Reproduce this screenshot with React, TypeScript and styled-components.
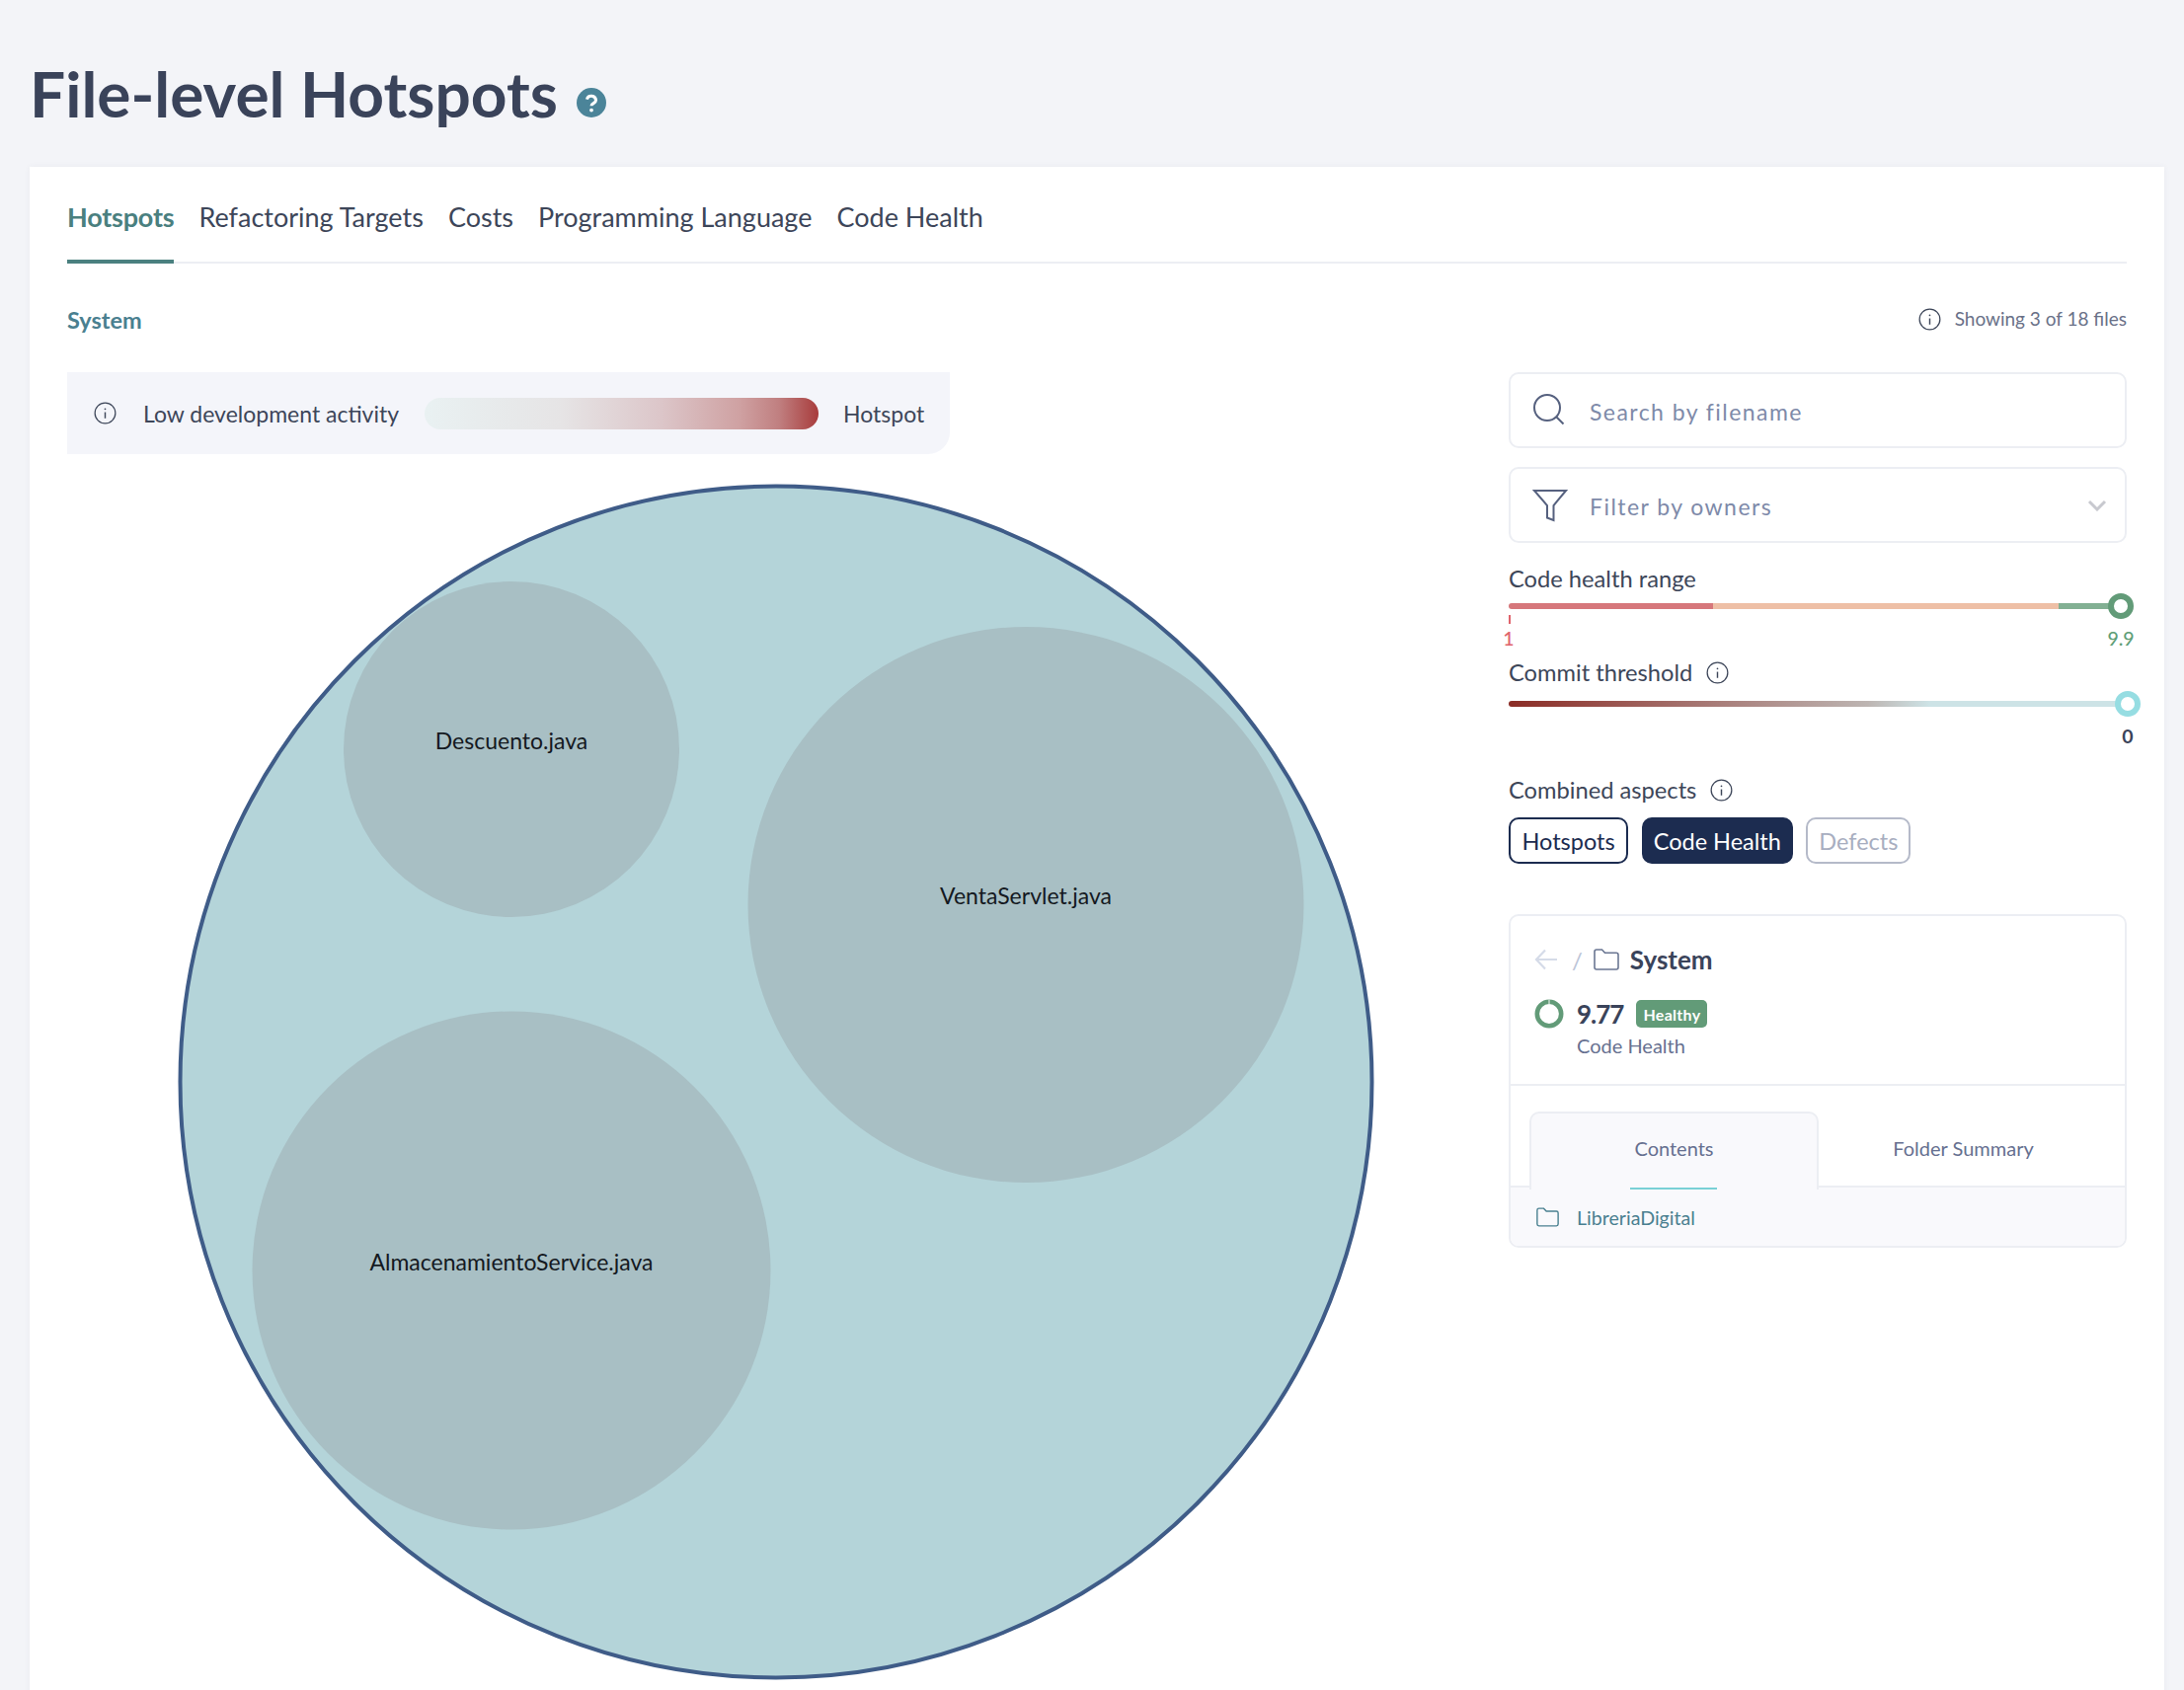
import React from "react";
import styled, { createGlobalStyle } from "styled-components";

const FONT = `"Lato", "Noto Sans", sans-serif`;

const Global = createGlobalStyle`
  html, body { margin: 0; padding: 0; background: #f3f4f8; }
  * { box-sizing: border-box; }
  body { font-family: ${FONT}; color: #3d4659; }
`;

const Page = styled.div`
  height: 1712px;
  overflow: hidden;
  padding: 0 20px 0 30px;
  background: #f3f4f8;
`;
const TitleRow = styled.header`
  height: 169px;
  display: flex;
  align-items: center;
  gap: 19px;
  padding-top: 21px;
`;
const Title = styled.h1`
  margin: 0;
  font-size: 64px;
  line-height: 70px;
  font-weight: 700;
  color: #3a435a;
`;
const Card = styled.main`
  background: #fff;
  padding: 0 38px;
  height: 1600px;
  box-shadow: 0 0 6px rgba(60, 70, 100, 0.06);
`;
const Tabs = styled.nav`
  height: 98px;
  display: flex;
  gap: 25px;
  border-bottom: 2px solid #eceef3;
`;
const Tab = styled.div<{ $active?: boolean }>`
  height: 98px;
  padding-top: 34px;
  font-size: 27px;
  line-height: 34px;
  font-weight: ${(p) => (p.$active ? 700 : 400)};
  letter-spacing: ${(p) => (p.$active ? "-0.2px" : "0")};
  color: ${(p) => (p.$active ? "#4a807f" : "#3d4659")};
  border-bottom: 4px solid ${(p) => (p.$active ? "#4a807f" : "transparent")};
`;
const SystemRow = styled.div`
  height: 110px;
  padding-top: 43px;
  display: flex;
  justify-content: space-between;
  align-items: flex-start;
`;
const SystemName = styled.div`
  font-size: 23.5px;
  line-height: 28px;
  font-weight: 700;
  color: #4a8090;
`;
const Showing = styled.div`
  display: flex;
  align-items: center;
  gap: 14px;
  margin-top: -1px;
  font-size: 19px;
  line-height: 28px;
  color: #6a7188;
`;
const Columns = styled.div`
  display: grid;
  grid-template-columns: 1fr 626px;
`;
const LeftCol = styled.section`
  min-width: 0;
`;
const Legend = styled.div`
  width: 894px;
  height: 83px;
  background: #f4f5fa;
  border-bottom-right-radius: 22px;
  display: flex;
  align-items: center;
  padding-left: 27px;
  font-size: 23px;
  color: #3d4659;
`;
const LegendStart = styled.span`
  margin-left: 27px;
  width: 270px;
`;
const LegendBar = styled.div`
  width: 399px;
  height: 32px;
  border-radius: 16px;
  margin-left: 15px;
  margin-right: 25px;
  background: linear-gradient(90deg, #e9f1f2 0%, #e6e4e5 35%, #dcc6c9 60%, #cfa1a2 80%, #c07f80 90%, #a83c3c 100%);
`;
const Chart = styled.svg`
  display: block;
  margin-top: 27px;
  width: 1340px;
  height: 1240px;
  overflow: visible;
`;
const ChartLabel = styled.text`
  font-family: ${FONT};
  font-size: 23px;
  fill: #14191f;
  text-anchor: middle;
`;
const RightCol = styled.aside`
  display: flex;
  flex-direction: column;
`;
const Field = styled.div`
  height: 77px;
  border: 2px solid #eceef3;
  border-radius: 10px;
  display: flex;
  align-items: center;
  padding-left: 22px;
  margin-bottom: 19px;
  font-size: 23px;
  letter-spacing: 1.45px;
  color: #7e8aa9;
`;
const FieldText = styled.span`
  margin-left: 22px;
  flex: 1;
  padding-top: 2px;
`;
const Chevron = styled.svg`
  margin-right: 18px;
`;
const Label = styled.div<{ $top: number }>`
  display: flex;
  align-items: center;
  gap: 14px;
  font-size: 23.7px;
  line-height: 30px;
  color: #3d4659;
  margin-top: ${(p) => p.$top}px;
`;
const SliderTrack = styled.div<{ $width: number; $top: number }>`
  position: relative;
  width: ${(p) => p.$width}px;
  height: 26px;
  margin-top: ${(p) => p.$top}px;
  display: flex;
  align-items: center;
`;
const Segment = styled.div<{ $grow: number; $color: string }>`
  flex: ${(p) => p.$grow} 0 0;
  height: 6px;
  background: ${(p) => p.$color};
  &:first-child { border-radius: 3px 0 0 3px; }
`;
const GradientBar = styled.div`
  width: 100%;
  height: 6px;
  border-radius: 3px;
  background: linear-gradient(90deg, #8b2c25 0%, #a57470 30%, #bdb5b2 58%, #cde3e6 68%, #cde3e6 100%);
`;
const Thumb = styled.div<{ $color: string }>`
  position: absolute;
  right: -13px;
  top: 0;
  width: 26px;
  height: 26px;
  border-radius: 50%;
  background: #fff;
  border: 6px solid ${(p) => p.$color};
`;
const Tick = styled.div`
  position: absolute;
  left: 0;
  top: 22px;
  width: 2px;
  height: 9px;
  background: #e0636c;
`;
const ValueRow = styled.div<{ $width: number; $top: number }>`
  width: ${(p) => p.$width}px;
  margin-top: ${(p) => p.$top}px;
  height: 24px;
  display: flex;
  justify-content: space-between;
  font-size: 19.5px;
  line-height: 24px;
`;
const Value = styled.span<{ $color: string; $bold?: boolean }>`
  color: ${(p) => p.$color};
  font-weight: ${(p) => (p.$bold ? 700 : 500)};
  width: 0;
  display: flex;
  justify-content: center;
  white-space: nowrap;
`;
const ToggleRow = styled.div`
  display: flex;
  gap: 13.5px;
  margin-top: 13px;
`;
const togglePad = { outline: 11.5, solid: 10, off: 11 };
const Toggle = styled.div<{ $variant: "outline" | "solid" | "off" }>`
  height: 47px;
  padding: 0 ${(p) => togglePad[p.$variant]}px;
  border-radius: 10px;
  display: flex;
  align-items: center;
  font-size: 23.5px;
  border: 2px solid ${(p) => (p.$variant === "off" ? "#b5bac9" : "#1c2c50")};
  background: ${(p) => (p.$variant === "solid" ? "#1c2c50" : "#fff")};
  color: ${(p) => (p.$variant === "solid" ? "#fff" : p.$variant === "off" ? "#a8aec0" : "#1c2c50")};
`;
const Panel = styled.section`
  margin-top: 51px;
  height: 338px;
  border: 2px solid #eceef3;
  border-radius: 10px;
  overflow: hidden;
`;
const PanelHead = styled.div`
  height: 172px;
  border-bottom: 2px solid #eceef3;
  padding: 26px 0 0 24px;
`;
const Crumb = styled.div`
  display: flex;
  align-items: center;
  height: 36px;
`;
const Slash = styled.span`
  margin: 0 11px 0 14px;
  font-size: 24px;
  color: #bcc5d8;
`;
const CrumbName = styled.span`
  margin-left: 11px;
  font-size: 26px;
  font-weight: 700;
  color: #3a435a;
`;
const ScoreRow = styled.div`
  display: flex;
  align-items: center;
  margin-top: 22px;
  height: 30px;
`;
const Score = styled.span`
  margin-left: 13px;
  font-size: 26px;
  font-weight: 700;
  letter-spacing: -1px;
  color: #3a435a;
`;
const Badge = styled.span`
  margin-left: 13px;
  height: 28px;
  padding: 0 7px;
  border-radius: 5px;
  background: #629b78;
  color: #fff;
  font-size: 16px;
  font-weight: 700;
  letter-spacing: 0.3px;
  display: flex;
  align-items: center;
`;
const ScoreCaption = styled.div`
  margin: 4px 0 0 43px;
  font-size: 20px;
  line-height: 26px;
  color: #667090;
`;
const SubTabs = styled.div`
  height: 103px;
  padding: 26px 0 0 19px;
  display: flex;
  border-bottom: 2px solid #eceef3;
`;
const SubTab = styled.div<{ $active?: boolean }>`
  position: relative;
  width: 293px;
  height: 79px;
  display: flex;
  align-items: center;
  justify-content: center;
  font-size: 20px;
  color: #667090;
  border-radius: 10px 10px 0 0;
  background: ${(p) => (p.$active ? "#f9f9fc" : "transparent")};
  border: 2px solid ${(p) => (p.$active ? "#eceef3" : "transparent")};
  border-bottom: none;
  padding-bottom: 7px;
  z-index: 1;
  &::after {
    content: "";
    display: ${(p) => (p.$active ? "block" : "none")};
    position: absolute;
    left: 100px;
    bottom: 0;
    width: 88px;
    height: 2px;
    background: #79d0d6;
  }
`;
const ContentRow = styled.div`
  height: 62px;
  background: #f9f9fc;
  display: flex;
  align-items: center;
  padding: 0 0 2px 26px;
  gap: 18px;
  font-size: 19.6px;
  color: #4a8090;
`;

const InfoIcon = ({ size = 23 }: { size?: number }) => (
  <svg width={size} height={size} viewBox="0 0 24 24" fill="none" stroke="#3d4659" strokeWidth="1.3">
    <circle cx="12" cy="12" r="10.8" />
    <path d="M12 11v6.5" strokeWidth="1.5" />
    <circle cx="12" cy="7.6" r="0.9" fill="#3d4659" stroke="none" />
  </svg>
);
const HelpIcon = () => (
  <svg width="30" height="30" viewBox="0 0 30 30" style={{ marginTop: 18 }}>
    <circle cx="15" cy="15" r="15" fill="#4b8499" />
    <path d="M10.4 11.6a4.7 4.7 0 0 1 9.2 1c0 3-4.6 3-4.6 5.6" fill="none" stroke="#fff" strokeWidth="3" />
    <circle cx="15" cy="22.6" r="1.9" fill="#fff" />
  </svg>
);
const SearchIcon = () => (
  <svg width="36" height="36" viewBox="0 0 36 36" fill="none" stroke="#56617f" strokeWidth="2">
    <circle cx="15" cy="15" r="13" />
    <path d="M24.5 24.5l7 7" />
  </svg>
);
const FunnelIcon = () => (
  <svg width="36" height="34" viewBox="0 0 36 34" fill="none" stroke="#56617f" strokeWidth="2">
    <path d="M2 2h32L21.5 17v15L15 29.5V17z" />
  </svg>
);
const FolderIcon = ({ w = 26, h = 22, color = "#6a7692" }: { w?: number; h?: number; color?: string }) => (
  <svg width={w} height={h} viewBox="0 0 26 22" fill="none" stroke={color} strokeWidth="1.6">
    <path d="M1 3a2 2 0 0 1 2-2h5.5l3 3.2H23a2 2 0 0 1 2 2V19a2 2 0 0 1-2 2H3a2 2 0 0 1-2-2z" />
  </svg>
);
const BackIcon = () => (
  <svg width="24" height="22" viewBox="0 0 24 22" fill="none" stroke="#d5dbe8" strokeWidth="2.2">
    <path d="M23 11H2M11 1.5L2 11l9 9.5" />
  </svg>
);
const Ring = () => (
  <svg width="30" height="30" viewBox="0 0 30 30" fill="none">
    <circle cx="15" cy="15" r="12.2" stroke="#629b78" strokeWidth="4.6" />
    <path d="M15 0.5v5" stroke="#dfe9e3" strokeWidth="1.2" />
  </svg>
);

const circles = [
  { cx: 450, cy: 272, r: 170, label: "Descuento.java", ly: 272 },
  { cx: 971, cy: 429.5, r: 281.5, label: "VentaServlet.java", ly: 429 },
  { cx: 450, cy: 800, r: 262.5, label: "AlmacenamientoService.java", ly: 800 },
];

export default function App() {
  return (
    <Page>
      <Global />
      <TitleRow>
        <Title>File-level Hotspots</Title>
        <HelpIcon />
      </TitleRow>
      <Card>
        <Tabs>
          <Tab $active>Hotspots</Tab>
          <Tab>Refactoring Targets</Tab>
          <Tab>Costs</Tab>
          <Tab>Programming Language</Tab>
          <Tab>Code Health</Tab>
        </Tabs>
        <SystemRow>
          <SystemName>System</SystemName>
          <Showing>
            <InfoIcon />
            Showing 3 of 18 files
          </Showing>
        </SystemRow>
        <Columns>
          <LeftCol>
            <Legend>
              <InfoIcon />
              <LegendStart>Low development activity</LegendStart>
              <LegendBar />
              Hotspot
            </Legend>
            <Chart viewBox="0 0 1340 1240">
              <circle cx="718" cy="609" r="603.5" fill="#b4d4d9" stroke="#3f5c88" strokeWidth="4" />
              {circles.map((c) => (
                <circle key={c.label} cx={c.cx} cy={c.cy} r={c.r} fill="#a8bfc4" />
              ))}
              {circles.map((c) => (
                <ChartLabel key={c.label} x={c.cx} y={c.ly}>
                  {c.label}
                </ChartLabel>
              ))}
            </Chart>
          </LeftCol>
          <RightCol>
            <Field>
              <SearchIcon />
              <FieldText>Search by filename</FieldText>
            </Field>
            <Field>
              <FunnelIcon />
              <FieldText>Filter by owners</FieldText>
              <Chevron width="20" height="12" viewBox="0 0 20 12" fill="none" stroke="#c8c9cf" strokeWidth="3">
                <path d="M2 2l8 8 8-8" />
              </Chevron>
            </Field>
            <Label $top={2}>Code health range</Label>
            <SliderTrack $width={620} $top={0}>
              <Segment $grow={207} $color="#d6777b" />
              <Segment $grow={350} $color="#eebfa6" />
              <Segment $grow={63} $color="#82b093" />
              <Thumb $color="#629b78" />
              <Tick />
            </SliderTrack>
            <ValueRow $width={620} $top={8}>
              <Value $color="#e0636c">1</Value>
              <Value $color="#5f9e78">9.9</Value>
            </ValueRow>
            <Label $top={7}>
              Commit threshold <InfoIcon />
            </Label>
            <SliderTrack $width={627} $top={4}>
              <GradientBar />
              <Thumb $color="#96dde2" />
            </SliderTrack>
            <ValueRow $width={627} $top={8}>
              <span />
              <Value $color="#3a435a" $bold>0</Value>
            </ValueRow>
            <Label $top={27}>
              Combined aspects <InfoIcon />
            </Label>
            <ToggleRow>
              <Toggle $variant="outline">Hotspots</Toggle>
              <Toggle $variant="solid">Code Health</Toggle>
              <Toggle $variant="off">Defects</Toggle>
            </ToggleRow>
            <Panel>
              <PanelHead>
                <Crumb>
                  <BackIcon />
                  <Slash>/</Slash>
                  <FolderIcon />
                  <CrumbName>System</CrumbName>
                </Crumb>
                <ScoreRow>
                  <Ring />
                  <Score>9.77</Score>
                  <Badge>Healthy</Badge>
                </ScoreRow>
                <ScoreCaption>Code Health</ScoreCaption>
              </PanelHead>
              <SubTabs>
                <SubTab $active>Contents</SubTab>
                <SubTab>Folder Summary</SubTab>
              </SubTabs>
              <ContentRow>
                <FolderIcon w={23} h={20} color="#4a8090" />
                LibreriaDigital
              </ContentRow>
            </Panel>
          </RightCol>
        </Columns>
      </Card>
    </Page>
  );
}
